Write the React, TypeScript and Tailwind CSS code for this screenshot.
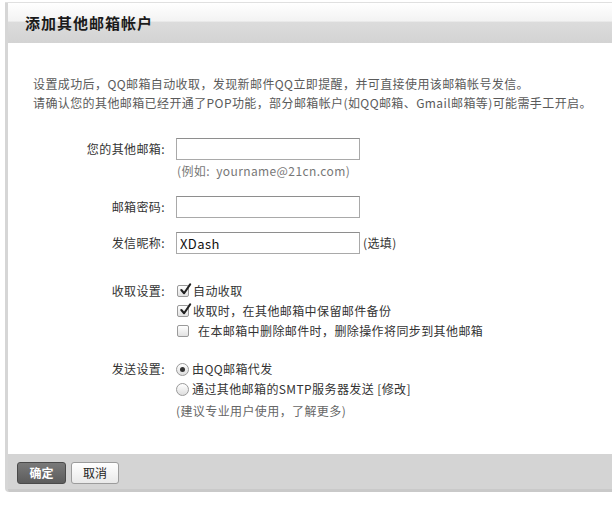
import React, { useState } from 'react';

const font = "font-['Noto_Sans_CJK_SC','Noto_Sans',sans-serif]";

const CheckBox: React.FC<{ checked: boolean; onToggle: () => void }> = ({ checked, onToggle }) => (
  <span
    onClick={onToggle}
    className="relative mr-[4px] inline-flex h-[12px] w-[12px] shrink-0 cursor-pointer items-center justify-center rounded-[2px] border border-[#9a9a9a] bg-gradient-to-b from-white to-[#e2e2e2]"
  >
    {checked && (
      <svg viewBox="0 0 14 14" className="absolute left-[1px] top-[-3px] h-[13px] w-[13px]">
        <path d="M2.5 7.5 L5.5 11 L12 1.5" fill="none" stroke="#222" strokeWidth="2.2" strokeLinecap="round" strokeLinejoin="round" />
      </svg>
    )}
  </span>
);

const Radio: React.FC<{ checked: boolean; onPick: () => void }> = ({ checked, onPick }) => (
  <span
    onClick={onPick}
    className="mr-[3px] inline-flex h-[13px] w-[13px] shrink-0 cursor-pointer items-center justify-center rounded-full border border-[#9a9a9a] bg-gradient-to-b from-white to-[#dedede]"
  >
    {checked && <span className="h-[5px] w-[5px] rounded-full bg-[#333]" />}
  </span>
);

const FieldInput: React.FC<{ value?: string; type?: string }> = ({ value = '', type = 'text' }) => {
  const [v, setV] = useState(value);
  return (
    <input
      type={type}
      value={v}
      onChange={(e) => setV(e.target.value)}
      className={`h-[22px] w-[184px] border border-[#a9a9a9] border-t-[#8e8e8e] bg-white px-[3px] text-[13px] text-[#111] outline-none ${font}`}
    />
  );
};

export default function App() {
  const [autoFetch, setAutoFetch] = useState(true);
  const [keepCopy, setKeepCopy] = useState(true);
  const [syncDelete, setSyncDelete] = useState(false);
  const [sendVia, setSendVia] = useState<'qq' | 'smtp'>('qq');

  return (
    <div className={`h-[505px] w-[612px] overflow-hidden bg-white pl-[5px] pt-[2px] ${font}`}>
      <div className="border-t border-[#e0e0e0]">
        <div className="overflow-hidden rounded-bl-[4px] border-l-[3px] border-[#d6d6d6]">
          {/* title bar */}
          <div className="flex h-[40px] items-center bg-[linear-gradient(to_bottom,#ffffff_0%,#f3f3f3_45%,#dcdcdc_48%,#d3d3d3_100%)] pl-[17px] text-[15px] font-bold tracking-[1px] text-[#1a1a1a]">
            添加其他邮箱帐户
          </div>

          {/* body */}
          <div className="h-[411px] bg-white pl-[25px] pt-[31px] text-[12px] tracking-[0.4px] text-[#333]">
            <div className="leading-[19px] text-[#5a5a5a]">
              <p>设置成功后，QQ邮箱自动收取，发现新邮件QQ立即提醒，并可直接使用该邮箱帐号发信。</p>
              <p>请确认您的其他邮箱已经开通了POP功能，部分邮箱帐户(如QQ邮箱、Gmail邮箱等)可能需手工开启。</p>
            </div>

            <div className="-ml-[25px] mt-[26px]">
              <div className="flex items-center">
                <label className="w-[157px] text-right">您的其他邮箱:</label>
                <div className="ml-[11px]">
                  <FieldInput />
                </div>
              </div>
              <div className="ml-[169px] mt-[3px] h-[16px] leading-[16px] text-[#777]">
                (例如:&nbsp;&nbsp;yourname@21cn.com)
              </div>

              <div className="mt-[17px] flex items-center">
                <label className="w-[157px] text-right">邮箱密码:</label>
                <div className="ml-[11px]">
                  <FieldInput type="password" />
                </div>
              </div>

              <div className="mt-[14px] flex items-center">
                <label className="w-[157px] text-right">发信昵称:</label>
                <div className="ml-[11px] flex items-center">
                  <FieldInput value="XDash" />
                  <span className="ml-[3px]">(选填)</span>
                </div>
              </div>

              {/* fetch options */}
              <div className="mt-[27px] flex">
                <label className="h-[20px] w-[157px] text-right leading-[20px]">收取设置:</label>
                <div className="ml-[12px] flex flex-col">
                  <div className="flex h-[20px] items-center">
                    <CheckBox checked={autoFetch} onToggle={() => setAutoFetch(!autoFetch)} />
                    <span>自动收取</span>
                  </div>
                  <div className="flex h-[20px] items-center">
                    <CheckBox checked={keepCopy} onToggle={() => setKeepCopy(!keepCopy)} />
                    <span>收取时，在其他邮箱中保留邮件备份</span>
                  </div>
                  <div className="flex h-[20px] items-center">
                    <CheckBox checked={syncDelete} onToggle={() => setSyncDelete(!syncDelete)} />
                    <span className="ml-[5px]">在本邮箱中删除邮件时，删除操作将同步到其他邮箱</span>
                  </div>
                </div>
              </div>

              {/* send options */}
              <div className="mt-[18px] flex">
                <label className="h-[20px] w-[157px] text-right leading-[20px]">发送设置:</label>
                <div className="ml-[11px] flex flex-col">
                  <div className="flex h-[20px] items-center">
                    <Radio checked={sendVia === 'qq'} onPick={() => setSendVia('qq')} />
                    <span>由QQ邮箱代发</span>
                  </div>
                  <div className="flex h-[20px] items-center">
                    <Radio checked={sendVia === 'smtp'} onPick={() => setSendVia('smtp')} />
                    <span>通过其他邮箱的SMTP服务器发送 [修改]</span>
                  </div>
                  <div className="mt-[2px] h-[20px] leading-[20px] text-[#666]">(建议专业用户使用，了解更多)</div>
                </div>
              </div>
            </div>
          </div>

          {/* footer buttons */}
          <div className="flex h-[38px] items-start gap-[5px] border-b-[3px] border-[#c9c9c9] bg-[#d4d4d4] pl-[9px] pt-[8px]">
            <button className="h-[22px] w-[49px] rounded-[3px] border border-[#4a4a4a] bg-gradient-to-b from-[#7a7a7a] to-[#5c5c5c] text-[12px] font-bold text-white">
              确定
            </button>
            <button className="h-[22px] w-[48px] rounded-[3px] border border-[#9c9c9c] bg-gradient-to-b from-white to-[#e9e9e9] text-[12px] text-[#222]">
              取消
            </button>
          </div>
        </div>
      </div>
    </div>
  );
}
